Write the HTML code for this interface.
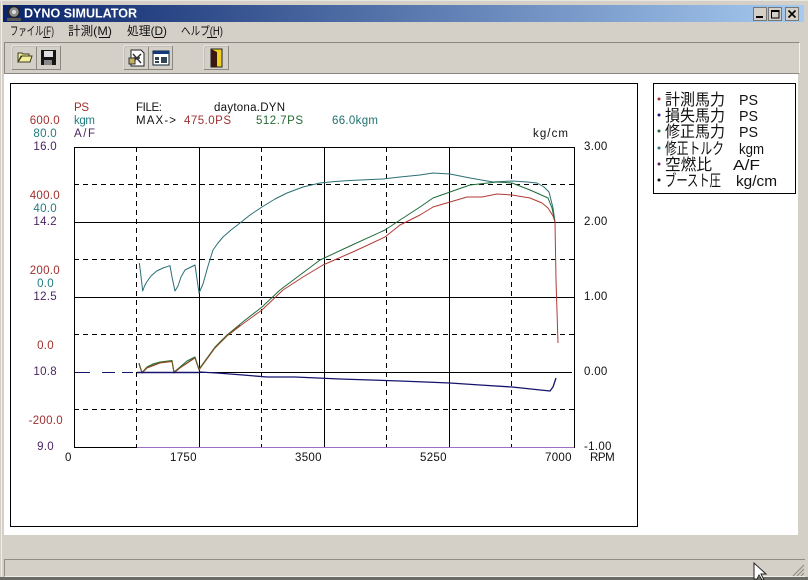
<!DOCTYPE html>
<html><head><meta charset="utf-8"><style>
html,body{margin:0;padding:0;background:#d4d0c8}
#w{position:relative;width:808px;height:580px;overflow:hidden;background:#d4d0c8}
#w div{position:absolute}
svg{position:absolute;left:0;top:0}
text{font-family:"Liberation Sans","Noto Sans CJK JP",sans-serif}
</style></head><body><div id="w">
<div style="left:0;top:0;width:808px;height:1px;background:#e8e6e0"></div>
<div style="left:1px;top:0;width:1px;height:580px;background:#f0eee9"></div>
<div style="left:3px;top:5px;width:801px;height:17px;background:linear-gradient(90deg,#0a246a,#a6caf0)"></div>
<div style="left:4px;top:42px;width:794px;height:30px;border:1px solid #8a8880;border-right-color:#f4f2ee;border-bottom-color:#8a8880;box-sizing:content-box"></div>
<div style="left:4px;top:74px;width:794px;height:461px;background:#fff"></div>
<div style="left:10px;top:83px;width:626px;height:442px;border:1px solid #000"></div>
<div style="left:653px;top:83px;width:141px;height:109px;border:1px solid #000"></div>
<div style="left:4px;top:559px;width:800px;height:16px;border:1px solid #8f8d86;border-bottom-color:#f0eee9;border-right:0"></div>
<div style="left:0;top:577px;width:808px;height:3px;background:#6a6a66"></div>
<svg width="808" height="580" viewBox="0 0 808 580">
<!-- title icon -->
<circle cx="14" cy="12" r="5.5" fill="#8d8d8d" stroke="#222" stroke-width="1.5"/><circle cx="14" cy="12" r="2" fill="#ddd"/>
<rect x="7" y="18" width="14" height="3" fill="#555"/>
<text x="24" y="17.5" font-size="12.5" font-weight="bold" fill="#fff" textLength="113" lengthAdjust="spacingAndGlyphs">DYNO SIMULATOR</text>
<!-- caption buttons -->
<g stroke="#777" fill="#d4d0c8"><rect x="753.5" y="7.5" width="13" height="13"/><rect x="768.5" y="7.5" width="13" height="13"/><rect x="785.5" y="7.5" width="13" height="13"/></g>
<rect x="756" y="16" width="7" height="2" fill="#000"/>
<rect x="771.5" y="10.5" width="7.5" height="7.5" fill="none" stroke="#000"/><rect x="771" y="10" width="8" height="2" fill="#000"/>
<path d="M788.5 10.5l7 7M795.5 10.5l-7 7" stroke="#000" stroke-width="1.6"/>
<!-- menu -->
<g font-size="12" fill="#111">
<text x="10" y="35" textLength="44" lengthAdjust="spacingAndGlyphs">ファイル(F)</text>
<text x="68" y="35" textLength="44" lengthAdjust="spacingAndGlyphs">計測(M)</text>
<text x="127" y="35" textLength="40" lengthAdjust="spacingAndGlyphs">処理(D)</text>
<text x="181" y="35" textLength="42" lengthAdjust="spacingAndGlyphs">ヘルプ(H)</text>
</g>
<path d="M43 37.5h7M99 37.5h11M154 37.5h10M207 37.5h10" stroke="#111" fill="none"/>
<!-- toolbar buttons -->
<g fill="#d4d0c8" stroke="#8a8880"><rect x="12.5" y="46.5" width="24" height="23"/><rect x="36.5" y="46.5" width="24" height="23"/><rect x="124.5" y="46.5" width="24" height="23"/><rect x="148.5" y="46.5" width="24" height="23"/><rect x="204.5" y="46.5" width="24" height="23"/></g>
<path d="M12 46h48M12 46v23M124 46h48M124 46v23M204 46h24M204 46v23" stroke="#f6f5f1" fill="none"/>
<path d="M18 62v-9h4l1 1h6v2h-8l-3 6zM18 62h12l2-6H22z" fill="#f4ee9a" stroke="#3c3c20"/>
<rect x="41" y="50" width="15" height="15" fill="#151515"/><rect x="44" y="51" width="9" height="6" fill="#dfdfdf"/><rect x="44" y="60" width="8" height="5" fill="#888"/>
<path d="M131 50h10l3 3v13h-13z" fill="#fff" stroke="#222"/><path d="M133 54l8 9M141 54l-8 8M133 58h7" stroke="#333" stroke-width="1.5"/><rect x="129" y="58" width="6" height="6" fill="#c8b060" stroke="#333"/>
<rect x="153" y="51" width="16" height="14" fill="#fff" stroke="#123"/><rect x="153" y="51" width="16" height="3" fill="#123a7a"/><path d="M155 57h4v3h-4zM161 57h6v6h-6zM155 61h4v2h-4z" fill="#345"/>
<rect x="211" y="49" width="11" height="18" fill="#f0d020" stroke="#222"/><path d="M211 49l6 3v15h-6z" fill="#3a1a10"/>
<!-- legend -->
<g font-size="16" fill="#111">
<text x="665" y="105" textLength="60" lengthAdjust="spacingAndGlyphs">計測馬力</text><text x="739" y="105" font-size="15" textLength="19" lengthAdjust="spacingAndGlyphs">PS</text>
<text x="665" y="121" textLength="60" lengthAdjust="spacingAndGlyphs">損失馬力</text><text x="739" y="121" font-size="15" textLength="19" lengthAdjust="spacingAndGlyphs">PS</text>
<text x="665" y="137" textLength="60" lengthAdjust="spacingAndGlyphs">修正馬力</text><text x="739" y="137" font-size="15" textLength="19" lengthAdjust="spacingAndGlyphs">PS</text>
<text x="665" y="154" textLength="59" lengthAdjust="spacingAndGlyphs">修正トルク</text><text x="739" y="154" font-size="14.5" textLength="25" lengthAdjust="spacingAndGlyphs">kgm</text>
<text x="665" y="170" textLength="47" lengthAdjust="spacingAndGlyphs">空燃比</text><text x="733" y="170" font-size="15" textLength="27" lengthAdjust="spacingAndGlyphs">A/F</text>
<text x="665" y="186" textLength="56" lengthAdjust="spacingAndGlyphs">ブースト圧</text><text x="736" y="186" font-size="14.5" textLength="41" lengthAdjust="spacingAndGlyphs">kg/cm</text>
</g>
<circle cx="659" cy="99" r="1.5" fill="#a03030"/><circle cx="659" cy="115" r="1.5" fill="#1a1a80"/><circle cx="659" cy="131" r="1.5" fill="#1a6a3a"/><circle cx="659" cy="148" r="1.5" fill="#2a7a7a"/><circle cx="659" cy="164" r="1.5" fill="#602060"/><circle cx="659" cy="180" r="1.5" fill="#111"/>
<!-- grid -->
<g fill="none" stroke="#000" shape-rendering="crispEdges">
<path d="M74.5 147.5H574.5V447.5H74.5Z"/>
<path d="M199.5 147V447M324.5 147V447M449.5 147V447M74 222.5H574M74 297.5H574"/>
<path d="M137 372.5H572" />
<path stroke-dasharray="5 4" d="M74 184.5H574M74 259.5H574M74 334.5H574M74 409.5H574M136.5 147V447M261.5 147V447M386.5 147V447M511.5 147V447"/>
</g>
<path d="M137 447.5H574" stroke="#a070c0" fill="none"/>
<!-- curves -->
<g fill="none" stroke-width="1" stroke-linejoin="round">
<path stroke="#2a6f74" d="M139.3 263L140.5 272L142.7 291L144.5 286L146.7 282L151 276L156.7 271L163 268L170 265.7L172 277L175 291L178 286L181 277L185 270L190 267.5L195 265L197 279L199 293L203 284L208 266L213 250L218 243L223 237L231 230L240 223L250 215L262 207L275 199L287 193L303 187L320 183L335 181.5L350 180.5L383 179L400 177L420 175L433 173L450 174L470 178L493 182L512 181L527 182L537 183L544 187L549 192L553 208L555 222"/>
<path stroke="#1f6b3a" d="M139 363L142 372.5L147 367L153 364L160 362L172 360.5L174 372L180 367L187 361L195 357L199 369L207 358L215 347L227 335L244 321L262 307L280 290L300 275L320 260L350 246L385 230L400 220L420 207L433 198L450 192L470 185L497 182L512 183L530 190L548 198L552 208L555 222"/>
<path stroke="#b03a34" d="M139 364L142 373L147 368L160 363L172 361.5L174 373L180 368L195 358L199 370L215 348L227 336L244 323L262 310L283 290L303 277L323 265L355 251L385 237L400 225L420 215L433 207L450 202L467 197L482 197L497 194L512 195L530 198L542 203L548 208L553 216L555 222L556 280L558 343"/>
<path stroke="#6b5a20" d="M139 363.5L142 372.7L147 367.5L160 362.5L172 361L174 372.5L180 367.5L195 357.5L199 369.5L215 347.5L227 335.5L240 325"/>
<path stroke="#14146e" stroke-width="1.3" d="M199 372L217 373L243 375L267 377L295 377L340 379L400 381L450 383L480 385L512 387L550 391L553 387L556 378"/>
<path stroke="#14146e" stroke-width="1.6" d="M137 372.5H199"/>
<path stroke="#14146e" stroke-width="1" d="M75 372.5H90M102 372.5H115M122 372.5H133"/>
</g>
<!-- header text -->
<g font-size="11.5">
<text x="74" y="111" fill="#a03030" textLength="15" lengthAdjust="spacing">PS</text>
<text x="74" y="124" fill="#1f7d80" textLength="21" lengthAdjust="spacing">kgm</text>
<text x="74" y="137" fill="#4a2560" textLength="21" lengthAdjust="spacing">A/F</text>
<text x="136" y="111" fill="#111" textLength="26" lengthAdjust="spacing">FILE:</text>
<text x="214" y="111" fill="#111" textLength="71" lengthAdjust="spacing">daytona.DYN</text>
<text x="136" y="124" fill="#111" textLength="40" lengthAdjust="spacing">MAX-&gt;</text>
<text x="184" y="124" fill="#a03030" textLength="47" lengthAdjust="spacing">475.0PS</text>
<text x="256" y="124" fill="#256b35" textLength="47" lengthAdjust="spacing">512.7PS</text>
<text x="332" y="124" fill="#1f7070" textLength="46" lengthAdjust="spacing">66.0kgm</text>
<text x="533" y="137" fill="#111" textLength="35" lengthAdjust="spacing">kg/cm</text>
</g>
<!-- left axis -->
<g font-size="11.5" text-anchor="end" letter-spacing=".3">
<g fill="#a03030">
<text x="60" y="124">600.0</text><text x="60" y="199">400.0</text><text x="60" y="274">200.0</text><text x="54" y="349">0.0</text><text x="63" y="424">-200.0</text>
</g>
<g fill="#1f7d80">
<text x="57" y="137">80.0</text><text x="57" y="212">40.0</text><text x="54" y="287">0.0</text>
</g>
<g fill="#4a2560">
<text x="57" y="150">16.0</text><text x="57" y="225">14.2</text><text x="57" y="300">12.5</text><text x="57" y="375">10.8</text><text x="54" y="450">9.0</text>
</g>
</g>
<!-- right + bottom axis -->
<g font-size="11.5" fill="#111" letter-spacing=".3">
<text x="584" y="150">3.00</text><text x="584" y="225">2.00</text><text x="584" y="300">1.00</text><text x="584" y="375">0.00</text><text x="584" y="450">-1.00</text>
<text x="65" y="461">0</text><text x="170" y="461">1750</text><text x="295" y="461">3500</text><text x="420" y="461">5250</text><text x="545" y="461">7000</text><text x="590" y="461" textLength="25" lengthAdjust="spacing">RPM</text>
</g>
<!-- grip -->
<path d="M793 576l11-11M797 576l7-7M801 576l3-3" stroke="#8a8880" fill="none"/>
<!-- cursor -->
<path d="M754 563v16h3l2-4 3 5h2l-3-6h5z" fill="#fff" stroke="#222"/>
</svg>
</div></body></html>
